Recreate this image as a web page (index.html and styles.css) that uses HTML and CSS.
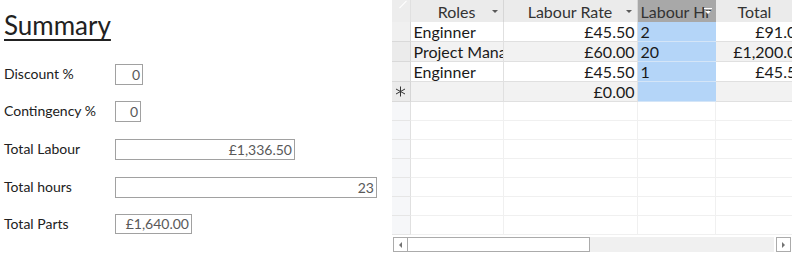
FILE: index.html
```html
<html>
  <head>
    <title>Summary</title>
    <link rel="stylesheet" href="styles.css">
  </head>
  <body>
    <div class="page">
      <section class="summary">
        <h1>Summary</h1>
        <div class="field discount">
          <label>Discount %</label>
          <div class="box w-discount">0</div>
        </div>
        <div class="field contingency">
          <label>Contingency %</label>
          <div class="box w-contingency">0</div>
        </div>
        <div class="field labour">
          <label>Total Labour</label>
          <div class="box w-labour">£1,336.50</div>
        </div>
        <div class="field hours">
          <label>Total hours</label>
          <div class="box w-hours">23</div>
        </div>
        <div class="field parts">
          <label>Total Parts</label>
          <div class="box w-parts">£1,640.00</div>
        </div>
      </section>

      <section class="sheet">
        <div class="grid-wrap">
          <table class="grid">
            <colgroup>
              <col class="c-sel">
              <col class="c-roles">
              <col class="c-rate">
              <col class="c-hours">
              <col class="c-total">
            </colgroup>
            <thead>
              <tr>
                <th class="corner"><span class="corner-mark"></span></th>
                <th><span class="head">Roles</span><span class="drop"></span></th>
                <th><span class="head">Labour Rate</span><span class="drop"></span></th>
                <th class="picked"><span class="head left">Labour Hr</span><span class="drop boxed"></span></th>
                <th><span class="head total">Total</span></th>
              </tr>
            </thead>
            <tbody>
              <tr>
                <td class="sel"></td>
                <td>Enginner</td>
                <td class="num">£45.50</td>
                <td class="hr">2</td>
                <td class="num">£91.00</td>
              </tr>
              <tr class="alt">
                <td class="sel"></td>
                <td>Project Manager</td>
                <td class="num">£60.00</td>
                <td class="hr">20</td>
                <td class="num">£1,200.00</td>
              </tr>
              <tr>
                <td class="sel"></td>
                <td>Enginner</td>
                <td class="num">£45.50</td>
                <td class="hr">1</td>
                <td class="num">£45.50</td>
              </tr>
              <tr class="alt new">
                <td class="sel">
                  <svg width="11" height="11" viewBox="0 0 11 11">
                    <g stroke="#333" stroke-width="1">
                      <line x1="5.5" y1="0.5" x2="5.5" y2="10.5"/>
                      <line x1="1" y1="3" x2="10" y2="8"/>
                      <line x1="1" y1="8" x2="10" y2="3"/>
                    </g>
                  </svg>
                </td>
                <td></td>
                <td class="num">£0.00</td>
                <td class="hr"></td>
                <td></td>
              </tr>
              <tr class="empty"><td class="sel"></td><td></td><td></td><td></td><td></td></tr>
              <tr class="empty"><td class="sel"></td><td></td><td></td><td></td><td></td></tr>
              <tr class="empty"><td class="sel"></td><td></td><td></td><td></td><td></td></tr>
              <tr class="empty"><td class="sel"></td><td></td><td></td><td></td><td></td></tr>
              <tr class="empty"><td class="sel"></td><td></td><td></td><td></td><td></td></tr>
              <tr class="empty"><td class="sel"></td><td></td><td></td><td></td><td></td></tr>
              <tr class="empty"><td class="sel"></td><td></td><td></td><td></td><td></td></tr>
            </tbody>
          </table>
        </div>
        <div class="hscroll">
          <div class="arrow"><span class="tri-left"></span></div>
          <div class="thumb"></div>
          <div class="track"></div>
          <div class="arrow"><span class="tri-right"></span></div>
        </div>
      </section>
    </div>
  </body>
</html>
```

FILE: styles.css
```css
:root {
  --ink: hsl(0, 0%, 13%);
  --soft-ink: hsl(0, 0%, 35%);
  --box-line: hsl(0, 0%, 63%);
  --grid-line: hsl(0, 0%, 88%);
  --faint-line: hsl(0, 0%, 94%);
  --head-bg: hsl(0, 0%, 92%);
  --picked-bg: hsl(0, 0%, 66%);
  --alt-bg: hsl(0, 0%, 95%);
  --hour-blue: hsl(211, 84%, 84%);
}

body {
  margin: 0;
  background-color: white;
  color: var(--ink);
  font-family: "Lato", "Open Sans", sans-serif;
  font-size: 14px;
}

.page {
  display: flex;
  flex-direction: row;
  width: 808px;
  height: 261px;
  overflow: hidden;
}

/* left summary form */
.summary {
  width: 392px;
  flex: none;
  padding: 0 0 0 4px;
  box-sizing: border-box;
}
h1 {
  font-family: "Lato", sans-serif;
  font-weight: normal;
  font-size: 26px;
  margin: 9px 0 0 0;
  line-height: 32px;
  text-decoration: underline;
  text-decoration-thickness: 2px;
  text-underline-offset: 4px;
}
.field {
  display: flex;
  flex-direction: row;
  align-items: center;
}
.field label {
  width: 111px;
  flex: none;
  position: relative;
  top: -1px;
}
.box {
  height: 21px;
  box-sizing: border-box;
  border: 1px solid var(--box-line);
  color: var(--soft-ink);
  text-align: right;
  padding: 0 2px 0 0;
  line-height: 19px;
}
.discount { margin-top: 23px; }
.contingency { margin-top: 16px; }
.labour { margin-top: 17px; }
.hours { margin-top: 17px; }
.parts { margin-top: 16px; }
.parts .box { height: 20px; line-height: 18px; }

.w-discount { width: 28px; }
.w-contingency { width: 26px; }
.w-labour { width: 180px; }
.w-hours { width: 262px; }
.w-parts { width: 77px; }

/* right datasheet */
.sheet {
  width: 400px;
  flex: none;
  font-size: 14px;
}
.grid-wrap {
  width: 400px;
  height: 237px;
  overflow: hidden;
}
table.grid {
  border-collapse: collapse;
  table-layout: fixed;
  width: 416px;
}
col.c-sel { width: 18px; }
col.c-roles { width: 93px; }
col.c-rate { width: 134px; }
col.c-hours { width: 78px; }
col.c-total { width: 93px; }

.grid th {
  height: 22px;
  padding: 0;
  background-color: var(--head-bg);
  font-weight: normal;
  text-align: center;
  position: relative;
  border-right: 1px solid hsl(0, 0%, 84%);
  white-space: nowrap;
  overflow: hidden;
  color: hsl(0, 0%, 20%);
}
.grid th.picked {
  background-color: var(--picked-bg);
  border-right-color: var(--picked-bg);
}
.head { display: inline-block; }
.head.left {
  display: block;
  text-align: left;
  padding-left: 3px;
}
.head.total {
  display: block;
  text-align: left;
  padding-left: 22px;
}
.drop {
  position: absolute;
  right: 5px;
  top: 10px;
  width: 0;
  height: 0;
  border-left: 3px solid transparent;
  border-right: 3px solid transparent;
  border-top: 3px solid hsl(0, 0%, 35%);
}
.drop.boxed {
  right: 4px;
  top: 11px;
  border-top-color: white;
}
.drop.boxed::before {
  content: "";
  position: absolute;
  left: -4px;
  top: -6px;
  width: 8px;
  height: 1px;
  background-color: white;
}
th.corner {
  background-color: hsl(0, 0%, 93%);
  border-right: 1px solid hsl(0, 0%, 88%);
}
.corner-mark {
  position: absolute;
  right: 2px;
  top: 4px;
  width: 10px;
  height: 1px;
  background-color: white;
  transform: rotate(-45deg);
}

.grid td {
  height: 19px;
  padding: 0 0 0 3px;
  border-bottom: 1px solid var(--grid-line);
  border-right: 1px solid var(--grid-line);
  white-space: nowrap;
  overflow: hidden;
  color: hsl(0, 0%, 10%);
  line-height: 19px;
}
.grid td.num {
  text-align: right;
  padding: 0 2px 0 0;
}
.grid td.sel {
  background-color: hsl(0, 0%, 94%);
  border-right: 1px solid hsl(0, 0%, 84%);
  border-bottom: 1px solid hsl(0, 0%, 85%);
  padding: 0;
  text-align: center;
  vertical-align: middle;
}
.grid td.sel svg { display: block; margin: 0 auto; }
.grid tr.alt td { background-color: var(--alt-bg); }
.grid tr.alt td.sel { background-color: hsl(0, 0%, 92%); }
.grid td.hr,
.grid tr.alt td.hr {
  background-color: var(--hour-blue);
  border-right-color: var(--hour-blue);
  border-bottom-color: hsl(211, 70%, 90%);
}
.grid tr.empty td {
  border-bottom-color: var(--faint-line);
  border-right-color: var(--faint-line);
}
.grid tr.empty td.sel {
  background-color: hsl(220, 20%, 97%);
  border-right-color: hsl(0, 0%, 88%);
  border-bottom-color: hsl(0, 0%, 90%);
}

.hscroll {
  display: flex;
  flex-direction: row;
  height: 15px;
  margin: 0 0 0 1px;
  width: 398px;
}
.arrow {
  width: 13px;
  height: 13px;
  border: 1px solid hsl(0, 0%, 67%);
  background-color: white;
  display: flex;
  align-items: center;
  justify-content: center;
  flex: none;
}
.tri-left {
  border-top: 3px solid transparent;
  border-bottom: 3px solid transparent;
  border-right: 3px solid hsl(0, 0%, 45%);
}
.tri-right {
  border-top: 3px solid transparent;
  border-bottom: 3px solid transparent;
  border-left: 3px solid hsl(0, 0%, 45%);
}
.thumb {
  width: 181px;
  height: 13px;
  border: 1px solid hsl(0, 0%, 67%);
  border-left: none;
  background-color: white;
  flex: none;
}
.track {
  flex: 1;
  background-color: hsl(0, 0%, 94%);
  margin-right: 2px;
}
```
